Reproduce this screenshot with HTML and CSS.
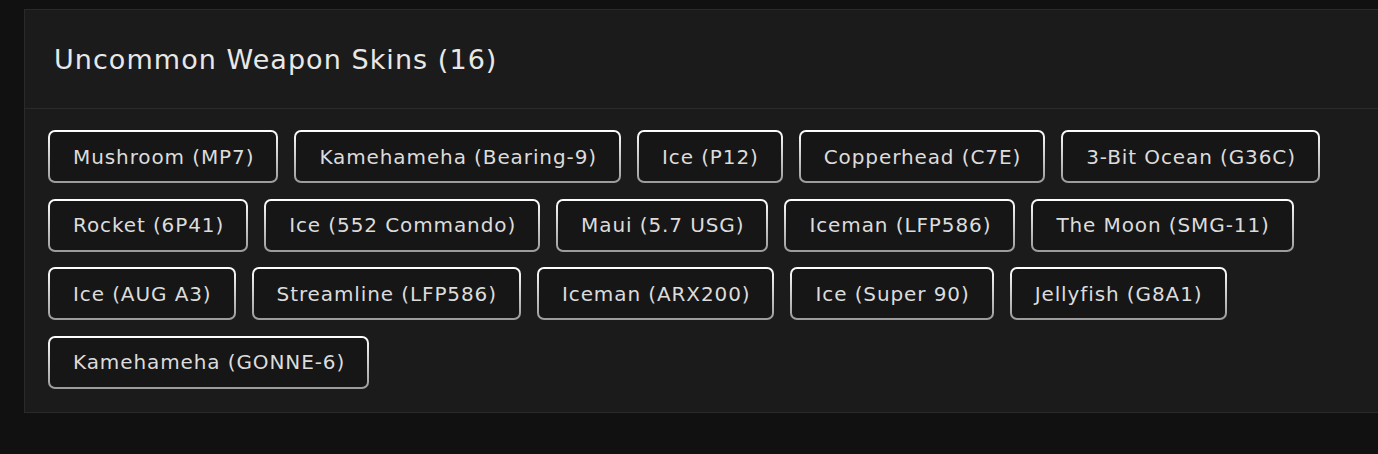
FILE: index.html
```html
<!DOCTYPE html>
<html>
<head>
<meta charset="utf-8">
<link rel="stylesheet" href="styles.css">
</head>
<body>
<section class="card">
  <header class="card-header">
    <h2 class="card-title">Uncommon Weapon Skins (16)</h2>
  </header>
  <div class="card-body">
    <span class="tag">Mushroom (MP7)</span>
    <span class="tag">Kamehameha (Bearing-9)</span>
    <span class="tag">Ice (P12)</span>
    <span class="tag">Copperhead (C7E)</span>
    <span class="tag">3-Bit Ocean (G36C)</span>
    <span class="tag">Rocket (6P41)</span>
    <span class="tag">Ice (552 Commando)</span>
    <span class="tag">Maui (5.7 USG)</span>
    <span class="tag">Iceman (LFP586)</span>
    <span class="tag">The Moon (SMG-11)</span>
    <span class="tag">Ice (AUG A3)</span>
    <span class="tag">Streamline (LFP586)</span>
    <span class="tag">Iceman (ARX200)</span>
    <span class="tag">Ice (Super 90)</span>
    <span class="tag">Jellyfish (G8A1)</span>
    <span class="tag">Kamehameha (GONNE-6)</span>
  </div>
</section>
</body>
</html>
```
FILE: styles.css
```css
html, body {
  margin: 0;
  padding: 0;
  background: #111111;
  overflow: hidden;
}
body {
  padding: 9px 0 0 24px;
  font-family: "DejaVu Sans", "Open Sans", sans-serif;
  color: #e0e0e0;
}
.card {
  width: 1380px;
  background: #1b1b1b;
  border: 1px solid #2a2a2a;
}
.card-header {
  height: 98px;
  display: flex;
  align-items: center;
  padding: 0 29px;
  border-bottom: 1px solid #2a2a2a;
}
.card-title {
  margin: 0;
  font-size: 27px;
  font-weight: normal;
  color: #e8e8e8;
  letter-spacing: 1.05px;
}
.card-body {
  display: flex;
  flex-wrap: wrap;
  gap: 15.5px 16px;
  padding: 21px 23px 23px;
}
.tag {
  display: inline-flex;
  align-items: center;
  height: 53px;
  box-sizing: border-box;
  padding: 0 22px 0 23px;
  border: 2px solid transparent;
  border-radius: 7px;
  background:
    linear-gradient(#161616, #161616) padding-box,
    linear-gradient(#ffffff, #9a9a9a) border-box;
  font-size: 20px;
  letter-spacing: 0.9px;
  color: #dcdcdc;
  white-space: nowrap;
}
```
